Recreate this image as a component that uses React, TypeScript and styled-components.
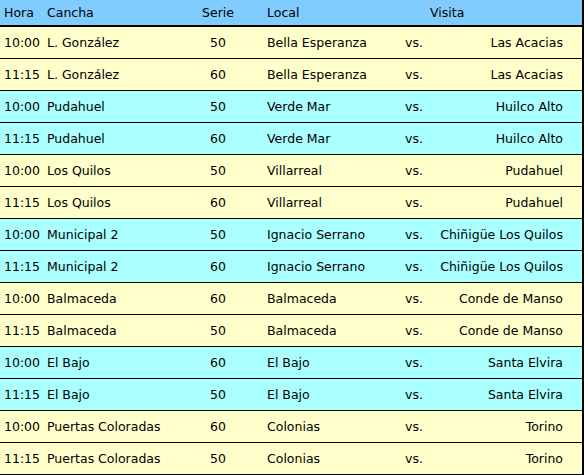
import React from 'react'
import styled, { createGlobalStyle } from 'styled-components'

const Global = createGlobalStyle`
    body {
        margin: 0;
        background: #ffffff;
        font-family: "DejaVu Sans", Verdana, sans-serif;
    }
`

const Table = styled.table`
    width: 584px;
    border-collapse: collapse;
    table-layout: fixed;
    border-right: 2px solid #000;
    border-bottom: 2px solid #000;
    font-size: 12.5px;
    color: #000;
`
const Head = styled.th<{ align?: string; pad?: string }>`
    height: 25px;
    padding: ${p => p.pad || '0 0 0 5px'};
    background: #80ccff;
    font-weight: normal;
    text-align: ${p => p.align || 'left'};
    border-bottom: 2px solid #000;
    white-space: nowrap;
`
const Row = styled.tr<{ tone: 'yellow' | 'cyan' }>`
    background: ${p => (p.tone === 'yellow' ? '#ffffcc' : '#aaffff')};
    border-bottom: 1px solid #000;
`
const Cell = styled.td<{ align?: string; pad?: string }>`
    height: 31px;
    padding: ${p => p.pad || '0 0 0 5px'};
    text-align: ${p => p.align || 'left'};
    white-space: nowrap;
    overflow: visible;
`

interface Partido {
    hora: string
    cancha: string
    serie: number
    local: string
    visita: string
}

const partidos: Partido[] = [
    { hora: '10:00', cancha: 'L. González', serie: 50, local: 'Bella Esperanza', visita: 'Las Acacias' },
    { hora: '11:15', cancha: 'L. González', serie: 60, local: 'Bella Esperanza', visita: 'Las Acacias' },
    { hora: '10:00', cancha: 'Pudahuel', serie: 50, local: 'Verde Mar', visita: 'Huilco Alto' },
    { hora: '11:15', cancha: 'Pudahuel', serie: 60, local: 'Verde Mar', visita: 'Huilco Alto' },
    { hora: '10:00', cancha: 'Los Quilos', serie: 50, local: 'Villarreal', visita: 'Pudahuel' },
    { hora: '11:15', cancha: 'Los Quilos', serie: 60, local: 'Villarreal', visita: 'Pudahuel' },
    { hora: '10:00', cancha: 'Municipal 2', serie: 50, local: 'Ignacio Serrano', visita: 'Chiñigüe Los Quilos' },
    { hora: '11:15', cancha: 'Municipal 2', serie: 60, local: 'Ignacio Serrano', visita: 'Chiñigüe Los Quilos' },
    { hora: '10:00', cancha: 'Balmaceda', serie: 60, local: 'Balmaceda', visita: 'Conde de Manso' },
    { hora: '11:15', cancha: 'Balmaceda', serie: 50, local: 'Balmaceda', visita: 'Conde de Manso' },
    { hora: '10:00', cancha: 'El Bajo', serie: 60, local: 'El Bajo', visita: 'Santa Elvira' },
    { hora: '11:15', cancha: 'El Bajo', serie: 50, local: 'El Bajo', visita: 'Santa Elvira' },
    { hora: '10:00', cancha: 'Puertas Coloradas', serie: 60, local: 'Colonias', visita: 'Torino' },
    { hora: '11:15', cancha: 'Puertas Coloradas', serie: 50, local: 'Colonias', visita: 'Torino' },
]

const App: React.FC = () => {
    return (
        <>
            <Global />
            <Table>
                <colgroup>
                    <col style={{ width: 42 }} />
                    <col style={{ width: 138 }} />
                    <col style={{ width: 76 }} />
                    <col style={{ width: 134 }} />
                    <col style={{ width: 48 }} />
                    <col />
                </colgroup>
                <thead>
                    <tr>
                        <Head pad="0 0 0 4px">Hora</Head>
                        <Head>Cancha</Head>
                        <Head align="center" pad="0">Serie</Head>
                        <Head pad="0 0 0 11px">Local</Head>
                        <Head colSpan={2} pad="0 0 0 40px">Visita</Head>
                    </tr>
                </thead>
                <tbody>
                    {partidos.map((p, i) => (
                        <Row key={i} tone={Math.floor(i / 2) % 2 === 0 ? 'yellow' : 'cyan'}>
                            <Cell pad="0 0 0 4px">{p.hora}</Cell>
                            <Cell>{p.cancha}</Cell>
                            <Cell align="center" pad="0">{p.serie}</Cell>
                            <Cell pad="0 0 0 11px">{p.local}</Cell>
                            <Cell align="center" pad="0">vs.</Cell>
                            <Cell align="right" pad="0 19px 0 0">{p.visita}</Cell>
                        </Row>
                    ))}
                </tbody>
            </Table>
        </>
    )
}

export default App
